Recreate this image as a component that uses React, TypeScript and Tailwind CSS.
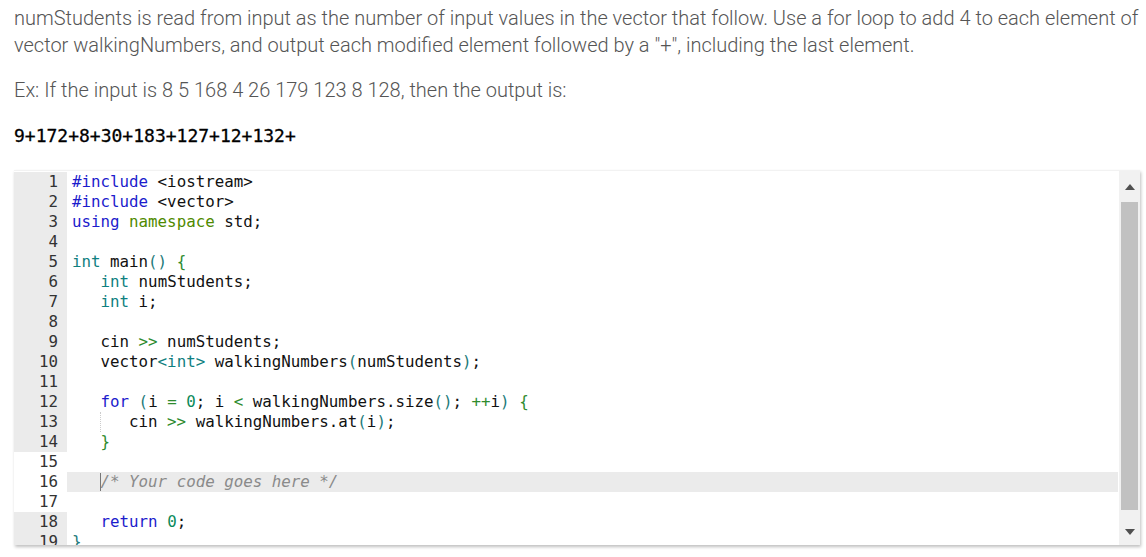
import React from "react";

type Tok = [string, string?];

const C = {
  kw: "text-[#1c1ccc]",
  ty: "text-[#0f8080]",
  ns: "text-[#4f8a00]",
  op: "text-[#2e8b2e]",
  num: "text-[#0b8a5a]",
  pn: "text-[#1d7a7a]",
  cm: "text-[#8a8a8a] italic",
};

const lines: Tok[][] = [
  [["#include", C.kw], [" <iostream>"]],
  [["#include", C.kw], [" <vector>"]],
  [["using", C.kw], [" "], ["namespace", C.ns], [" std;"]],
  [],
  [["int", C.ty], [" main"], ["()", C.pn], [" "], ["{", C.op]],
  [["   "], ["int", C.ty], [" numStudents;"]],
  [["   "], ["int", C.ty], [" i;"]],
  [],
  [["   cin "], [">>", C.op], [" numStudents;"]],
  [["   vector"], ["<int>", C.ty], [" walkingNumbers"], ["(", C.pn], ["numStudents"], [")", C.pn], [";"]],
  [],
  [["   "], ["for", C.kw], [" "], ["(", C.pn], ["i "], ["=", C.op], [" "], ["0", C.num], ["; i "], ["<", C.op], [" walkingNumbers.size"], ["()", C.pn], ["; "], ["++", C.op], ["i"], [")", C.pn], [" "], ["{", C.op]],
  [["      cin "], [">>", C.op], [" walkingNumbers.at"], ["(", C.pn], ["i"], [")", C.pn], [";"]],
  [["   "], ["}", C.op]],
  [],
  [["   "], ["/* Your code goes here */", C.cm]],
  [],
  [["   "], ["return", C.kw], [" "], ["0", C.num], [";"]],
  [["}", C.pn]],
];

function ScrollBar() {
  return (
    <div className="w-[21px] bg-[#f1f1f1] flex flex-col items-center shrink-0">
      <div className="h-[31px] flex items-center justify-center">
        <svg width="10" height="6" viewBox="0 0 10 6"><path d="M0 6 L5 0 L10 6 Z" fill="#505050" /></svg>
      </div>
      <div className="w-[17px] h-[308px] bg-[#c1c1c1]" />
      <div className="flex-1 flex items-center justify-center pt-2">
        <svg width="10" height="6" viewBox="0 0 10 6"><path d="M0 0 L10 0 L5 6 Z" fill="#505050" /></svg>
      </div>
    </div>
  );
}

export default function App() {
  return (
    <div className="w-[1146px] h-[557px] bg-white overflow-hidden pl-[14px] pr-[4px] pt-[5px]" style={{ fontFamily: "Roboto, 'Noto Sans', sans-serif" }}>
      <p className="text-[20px] leading-[27px] font-light text-[#555]">
        numStudents is read from input as the number of input values in the vector that follow. Use a for loop to add 4 to each element of vector walkingNumbers, and output each modified element followed by a "+", including the last element.
      </p>
      <p className="text-[20px] leading-[27px] font-light text-[#555] mt-[18px]">
        Ex: If the input is 8 5 168 4 26 179 123 8 128, then the output is:
      </p>
      <pre className="mt-[18px] text-[18px] leading-[27px] text-black" style={{ fontFamily: "'DejaVu Sans Mono', monospace", WebkitTextStroke: "0.3px black" }}>9+172+8+30+183+127+12+132+</pre>

      <div className="mt-[21px] w-[1126px] h-[375px] flex bg-white shadow-[1px_2px_3px_rgba(0,0,0,0.25)] border-t border-[#f2f2f2] overflow-hidden">
        <div className="flex-1 flex flex-col pt-px text-[15.8px] leading-[20px]" style={{ fontFamily: "'DejaVu Sans Mono', monospace" }}>
          {lines.map((toks, i) => {
            const n = i + 1;
            const white = n >= 15 && n <= 17;
            const active = n === 16;
            return (
              <div key={n} className="flex h-[20px] shrink-0">
                <div className={`w-[53px] pr-[9px] text-right text-[#333] shrink-0 ${white ? "bg-white" : "bg-[#ebebeb]"}`}>{n}</div>
                <div className={`relative flex-1 pl-[5px] whitespace-pre text-[#111] ${active ? "bg-[#ebebeb] mr-px" : ""}`}>
                  {n === 13 && <span className="absolute left-[33px] top-0 h-[20px] border-l border-dotted border-[#ccc]" />}
                  {active && <span className="absolute left-[33px] top-[1px] h-[18px] w-px bg-[#777]" />}
                  {toks.map((t, j) => (
                    <span key={j} className={t[1] ?? ""}>{t[0]}</span>
                  ))}
                </div>
              </div>
            );
          })}
        </div>
        <ScrollBar />
      </div>
    </div>
  );
}
